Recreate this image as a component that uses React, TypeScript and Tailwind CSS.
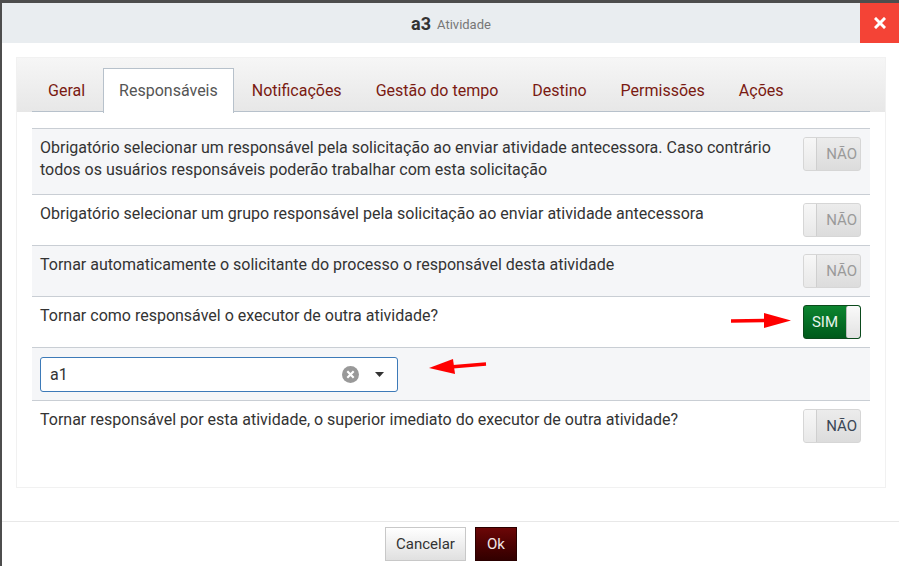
import React from "react";

const tabs = [
  "Geral",
  "Responsáveis",
  "Notificações",
  "Gestão do tempo",
  "Destino",
  "Permissões",
  "Ações",
];

function Toggle({ on, dark }: { on?: boolean; dark?: boolean }) {
  if (on) {
    return (
      <div className="flex h-[34px] w-[58px] shrink-0 overflow-hidden rounded-[3px] border border-[#0b4a1c] bg-gradient-to-b from-[#0d8530] to-[#005a1b]">
        <div className="flex flex-1 items-center justify-center text-[15px] text-[#e8f4ec]">SIM</div>
        <div className="w-[14px] rounded-[2px] border-l border-[#bbb] bg-gradient-to-b from-[#fafafa] to-[#e2e2e2]" />
      </div>
    );
  }
  return (
    <div className="flex h-[34px] w-[58px] shrink-0 overflow-hidden rounded-[3px] border border-[#d6d6d6] bg-gradient-to-b from-[#ececec] to-[#dcdcdc]">
      <div className="w-[13px] border-r border-[#cfcfcf] bg-gradient-to-b from-[#f7f7f7] to-[#e8e8e8]" />
      <div
        className={`flex flex-1 items-center justify-end pr-[3px] text-[15px] ${
          dark ? "text-[#3a4656]" : "text-[#9a9a9a]"
        }`}
      >
        NÃO
      </div>
    </div>
  );
}

function Row({
  children,
  gray,
  h,
  toggle,
}: {
  children: React.ReactNode;
  gray?: boolean;
  h: string;
  toggle?: React.ReactNode;
}) {
  return (
    <div
      className={`flex items-start justify-between border-t border-[#c9ced4] pl-[8px] pr-[9px] pt-[8px] ${h} ${
        gray ? "bg-[#f5f6f8]" : "bg-white"
      }`}
    >
      <div className="whitespace-nowrap text-[16px] leading-[22px] text-[#333]">{children}</div>
      {toggle}
    </div>
  );
}

export default function App() {
  return (
    <div className="relative h-[566px] w-[899px] overflow-hidden bg-[#4d4d4d] font-['Roboto',sans-serif]">
      <div className="ml-[2px] mt-[3px] flex h-[563px] w-[898px] flex-col bg-white">
        {/* header */}
        <div className="relative flex h-[40px] shrink-0 items-center justify-center bg-[#e9edf0] pt-[1px]">
          <span className="text-[18px] font-bold text-[#333]">a3</span>
          <span className="ml-[6px] mt-[3px] text-[13px] text-[#777]">Atividade</span>
          <div className="absolute left-[858px] top-0 flex h-[40px] w-[40px] items-center justify-center bg-[#f44336]">
            <svg width="12" height="12" viewBox="0 0 12 12">
              <path d="M2 2 L10 10 M10 2 L2 10" stroke="#fff" strokeWidth="3" strokeLinecap="square" />
            </svg>
          </div>
        </div>

        {/* body */}
        <div className="px-[15px] pt-[15px]">
          <div className="h-[429px] shadow-[0_0_0_1px_#f1f1f1]">
            <div className="h-[54px] bg-gradient-to-b from-[#f6f6f6] to-[#e7e7e7] px-[15px] pt-[10px]">
              <div className="flex h-[44px] border-b border-[#b7c1cb]">
                {tabs.map((t) => {
                  const active = t === "Responsáveis";
                  return (
                    <div
                      key={t}
                      className={`mr-[2px] flex items-center border border-b-0 px-[15px] text-[16px] ${
                        active
                          ? "-mb-px h-[45px] border-[#b7c1cb] bg-white text-[#555]"
                          : "h-[44px] border-transparent text-[#7a1a12]"
                      }`}
                    >
                      {t}
                    </div>
                  );
                })}
              </div>
            </div>

            <div className="relative mt-[16px] px-[15px]">
              <Row gray h="h-[66px]" toggle={<Toggle />}>
                Obrigatório selecionar um responsável pela solicitação ao enviar atividade antecessora. Caso contrário
                <br />
                todos os usuários responsáveis poderão trabalhar com esta solicitação
              </Row>
              <Row h="h-[51px]" toggle={<Toggle />}>
                Obrigatório selecionar um grupo responsável pela solicitação ao enviar atividade antecessora
              </Row>
              <Row gray h="h-[51px]" toggle={<Toggle />}>
                Tornar automaticamente o solicitante do processo o responsável desta atividade
              </Row>
              <Row h="h-[51px]" toggle={<Toggle on />}>
                Tornar como responsável o executor de outra atividade?
              </Row>
              <div className="h-[53px] border-t border-[#c9ced4] bg-[#f5f6f8] px-[8px] pt-[9px]">
                <div className="flex h-[35px] w-[358px] items-center rounded-[3px] border border-[#3d7ab8] bg-white pl-[9px] pr-[13px]">
                  <span className="flex-1 text-[16px] text-[#333]">a1</span>
                  <svg width="17" height="17" viewBox="0 0 16 16" className="mr-[16px]">
                    <circle cx="8" cy="8" r="8" fill="#999" />
                    <path d="M5 5 L11 11 M11 5 L5 11" stroke="#fff" strokeWidth="2" />
                  </svg>
                  <svg width="9" height="5" viewBox="0 0 9 5">
                    <path d="M0 0 L9 0 L4.5 5 Z" fill="#333" />
                  </svg>
                </div>
              </div>
              <Row h="h-[60px]" toggle={<Toggle dark />}>
                Tornar responsável por esta atividade, o superior imediato do executor de outra atividade?
              </Row>

              {/* annotation arrows */}
              <svg className="absolute left-[714px] top-[183px]" width="62" height="20" viewBox="0 0 62 20">
                <path d="M0 10 L36 9.5" stroke="#f00" strokeWidth="3.5" />
                <path d="M33 2 L60 9.5 L33 17 Z" fill="#f00" />
              </svg>
              <svg className="absolute left-[411px] top-[227px]" width="62" height="20" viewBox="0 0 62 20">
                <path d="M22 12 L58 9" stroke="#f00" strokeWidth="3.5" />
                <path d="M1 13 L25 4 L27 19 Z" fill="#f00" />
              </svg>
            </div>
          </div>
        </div>

        {/* footer */}
        <div className="mt-[34px] flex justify-center gap-[9px] border-t border-[#e8e8e8] pt-[5px]">
          <div className="flex h-[34px] w-[81px] items-center justify-center border border-[#c8c8c8] bg-gradient-to-b from-white to-[#e0e0e0] text-[15px] text-[#333]">
            Cancelar
          </div>
          <div className="flex h-[34px] w-[42px] items-center justify-center border border-[#2a0000] bg-gradient-to-b from-[#6c0707] to-[#320000] text-[15px] text-[#f3e6e6]">
            Ok
          </div>
        </div>
      </div>
    </div>
  );
}
